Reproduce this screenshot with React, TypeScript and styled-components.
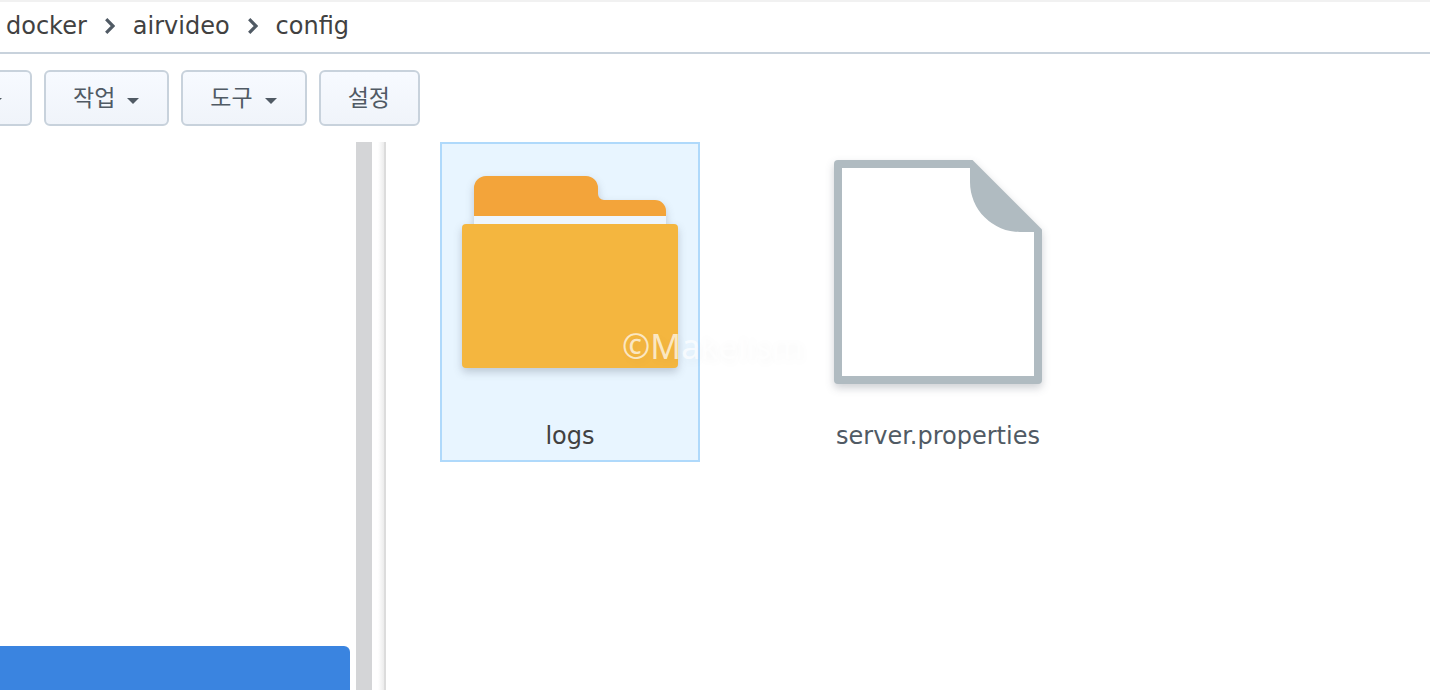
import React from "react";
import styled, { createGlobalStyle } from "styled-components";

const GlobalStyle = createGlobalStyle`
  *, *::before, *::after { box-sizing: border-box; }
  body {
    margin: 0;
    background: #fff;
    font-family: "DejaVu Sans", "Noto Sans CJK KR", sans-serif;
    color: #505a64;
  }
`;

const Page = styled.div`
  display: flex;
  flex-direction: column;
  height: 100vh;
  overflow: hidden;
`;

const PathBar = styled.nav`
  display: flex;
  align-items: center;
  gap: 18px;
  height: 54px;
  padding: 0 6px 2px;
  border-top: 2px solid #f1f1f1;
  border-bottom: 2px solid #c8d2dc;
`;

const Crumb = styled.a`
  color: #414141;
  font-size: 24px;
  line-height: 32px;
  text-decoration: none;
`;

const Toolbar = styled.div`
  display: flex;
  gap: 12px;
  padding: 16px 0;
`;

const ToolButton = styled.button<{ $cut?: boolean }>`
  display: flex;
  align-items: center;
  gap: 12px;
  height: 56px;
  padding: ${(p) => (p.$cut ? "0 28px 4px 0" : "0 28px 4px 27px")};
  border: 2px solid #c8d2dc;
  border-left-width: ${(p) => (p.$cut ? "0" : "2px")};
  border-radius: ${(p) => (p.$cut ? "0 6px 6px 0" : "6px")};
  background: linear-gradient(#f7faff, #f0f4fa);
  color: #505a64;
  font-family: "Noto Sans CJK KR", sans-serif;
  font-size: 23px;
  line-height: 32px;
`;

const Caret = styled.svg`
  margin-top: 10px;
`;

const Main = styled.main`
  display: flex;
  flex: 1;
  min-height: 0;
`;

const Tree = styled.aside`
  display: flex;
  flex-direction: column;
  justify-content: flex-end;
  width: 350px;
`;

const SelectedNode = styled.div`
  height: 44px;
  border-top-right-radius: 6px;
  background: #3a84e0;
`;

const ScrollThumb = styled.div`
  width: 16px;
  margin: 0 6px;
  background: #d4d5d7;
`;

const Divider = styled.div`
  width: 8px;
  border-right: 2px solid #dcdcdc;
  background: linear-gradient(to right, #fff, #ececec);
`;

const Files = styled.section`
  display: flex;
  flex: 1;
  flex-wrap: wrap;
  align-items: flex-start;
  align-content: flex-start;
  gap: 24px 108px;
  padding-left: 54px;
`;

const FileItem = styled.div<{ $selected?: boolean }>`
  position: relative;
  display: flex;
  flex-direction: column;
  align-items: center;
  width: 260px;
  height: 320px;
  border: 2px solid ${(p) => (p.$selected ? "#afd9fb" : "transparent")};
  background: ${(p) => (p.$selected ? "#e8f5ff" : "transparent")};
  color: ${(p) => (p.$selected ? "#414141" : "#505a64")};
`;

const FileIcon = styled.svg`
  flex: none;
  filter: drop-shadow(0 4px 4px rgba(30, 40, 60, 0.22));
`;

const FileName = styled.span`
  margin-top: 20px;
  font-size: 24px;
  line-height: 32px;
`;

const Watermark = styled.span`
  position: absolute;
  z-index: 1;
  left: 180px;
  top: 176px;
  color: rgba(255, 255, 255, 0.7);
  font-family: "Noto Sans", sans-serif;
  font-size: 34px;
  line-height: 52px;
  white-space: nowrap;
  text-shadow: 2px 4px 8px rgba(0, 0, 0, 0.04);
`;

const Separator = () => (
  <svg width="10" height="16" viewBox="0 0 10 16" aria-hidden="true">
    <path d="M1.200 1.200 8 8l-6.800 6.800" fill="none" stroke="#505a64" strokeWidth="3.200" />
  </svg>
);

const DownCaret = ({ cut = false }: { cut?: boolean }) => (
  <Caret
    width={cut ? 2 : 12}
    height="6"
    viewBox={cut ? "10 0 2 6" : "0 0 12 6"}
    aria-hidden="true"
  >
    <path d="M0 0h12L6 6z" fill="#505a64" />
  </Caret>
);

export default function App() {
  return (
    <Page>
      <GlobalStyle />
      <PathBar>
        <Crumb href="#docker">docker</Crumb>
        <Separator />
        <Crumb href="#airvideo">airvideo</Crumb>
        <Separator />
        <Crumb href="#config">config</Crumb>
      </PathBar>
      <Toolbar>
        <ToolButton $cut type="button" aria-haspopup="menu">
          <DownCaret cut />
        </ToolButton>
        <ToolButton type="button" aria-haspopup="menu">
          작업
          <DownCaret />
        </ToolButton>
        <ToolButton type="button" aria-haspopup="menu">
          도구
          <DownCaret />
        </ToolButton>
        <ToolButton type="button">설정</ToolButton>
      </Toolbar>
      <Main>
        <Tree>
          <SelectedNode />
        </Tree>
        <ScrollThumb />
        <Divider />
        <Files>
          <FileItem $selected>
            <FileIcon width="256" height="256" viewBox="0 0 256 256" aria-hidden="true">
              <path
                d="M32 72V44a12 12 0 0 1 12-12h100a12 12 0 0 1 12 12v6a6 6 0 0 0 6 6h51a11 11 0 0 1 11 11v5z"
                fill="#f3a43a"
              />
              <path d="M32 72h192v8H32z" fill="#edf6fe" />
              <rect x="20" y="80" width="216" height="144" rx="4" fill="#f4b63f" />
            </FileIcon>
            <FileName>logs</FileName>
            <Watermark>©Makelism</Watermark>
          </FileItem>
          <FileItem>
            <FileIcon width="256" height="256" viewBox="0 0 256 256" aria-hidden="true">
              <path
                d="M28 16h134.500L232 85.500V236a4 4 0 0 1-4 4H28a4 4 0 0 1-4-4V20a4 4 0 0 1 4-4z"
                fill="#b0bbc1"
              />
              <path d="M32 24h128v14a50 50 0 0 0 50 50h14v144H32z" fill="#fff" />
            </FileIcon>
            <FileName>server.properties</FileName>
          </FileItem>
        </Files>
      </Main>
    </Page>
  );
}
